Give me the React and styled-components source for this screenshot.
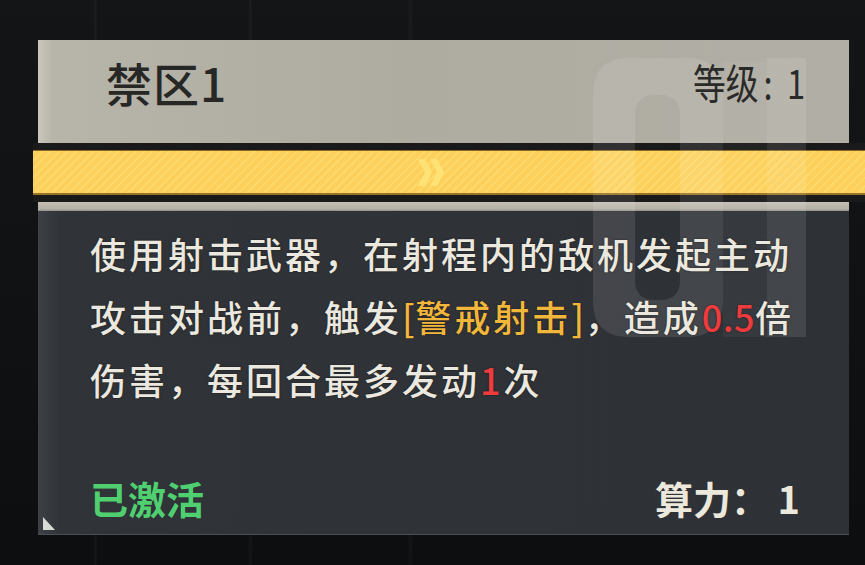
import React from "react";
import styled, { createGlobalStyle } from "styled-components";

const GlobalStyle = createGlobalStyle`
  html, body {
    margin: 0;
    padding: 0;
    background: #0f1012;
  }
  * { box-sizing: border-box; }
`;

const CJK = `"Noto Sans CJK SC", "Noto Sans", sans-serif`;

const Stage = styled.div`
  width: 865px;
  height: 565px;
  overflow: hidden;
  padding-top: 40px;
  background-color: #0f1012;
  background-image:
    linear-gradient(90deg, transparent 93px, rgba(255,255,255,0.035) 95px, transparent 98px),
    linear-gradient(90deg, transparent 248px, rgba(255,255,255,0.03) 250px, transparent 253px),
    linear-gradient(90deg, transparent 408px, rgba(255,255,255,0.03) 410px, transparent 413px),
    linear-gradient(180deg, #141517 0%, #0d0e10 100%);
  font-family: ${CJK};
`;

const Card = styled.div`
  position: relative;
  margin-left: 38px;
  width: 811px;
`;

const Header = styled.div`
  height: 103px;
  display: flex;
  align-items: center;
  justify-content: space-between;
  padding: 0 44px 0 68px;
  background: linear-gradient(90deg, #cbc7bb 0px, #b7b4aa 14px, #aeaba1 45%, #b1aea5 100%);
`;

const Title = styled.h1`
  position: relative;
  z-index: 2;
  margin: 0;
  font-size: 46px;
  font-weight: 500;
  line-height: 1;
  color: #272726;
  letter-spacing: 1px;
  transform: translateY(-10px);
`;

const Level = styled.div`
  position: relative;
  z-index: 2;
  display: flex;
  align-items: baseline;
  font-size: 41px;
  font-weight: 400;
  line-height: 1;
  color: #2a2a29;
  transform: translateY(-10px) scaleX(0.8);
  transform-origin: right center;
  white-space: nowrap;
`;

const LevelPart = styled.span`
  margin-left: ${(p) => p.$gap || 0}px;
`;

const Ribbon = styled.div`
  margin: 0 -16px 0 -5px;
  padding: 7px 0;
  background: #1a1a1a;
`;

const RibbonBar = styled.div`
  height: 45px;
  display: flex;
  align-items: center;
  padding-left: 385px;
  border-top: 1px solid #8a6a22;
  border-bottom: 2px solid #9a7426;
  background-color: #fcd05a;
  background-image: repeating-linear-gradient(
    135deg,
    rgba(255, 236, 150, 0.28) 0px,
    rgba(255, 236, 150, 0.28) 2px,
    transparent 2px,
    transparent 6px
  );
`;

const Strip = styled.div`
  height: 9px;
  background: linear-gradient(180deg, #c3bfb4 0%, #b3b0a6 80%, #8e8b84 100%);
`;

const Body = styled.div`
  height: 324px;
  display: flex;
  flex-direction: column;
  justify-content: space-between;
  padding: 11px 49px 17px 52px;
  background: linear-gradient(90deg, #3d4045 0px, #303338 22px, #2e3136 100%);
  border-bottom: 1px solid #4b4e52;
`;

const Description = styled.div`
  position: relative;
  z-index: 2;
  font-size: 36px;
  font-weight: 500;
  line-height: 63px;
  color: #ebe8df;
  text-shadow: 0 0 2px rgba(0, 0, 0, 0.55);
`;

const Line = styled.div`
  white-space: nowrap;
  letter-spacing: 3px;
`;

const Mark = styled.span`
  color: ${(p) => p.$tone};
  letter-spacing: ${(p) => (p.$tight ? "0.5px" : "inherit")};
`;

const Footer = styled.div`
  position: relative;
  z-index: 2;
  display: flex;
  justify-content: space-between;
  align-items: flex-end;
  font-size: 38px;
  line-height: 38px;
  font-weight: 700;
`;

const Status = styled.span`
  color: #4fcf6f;
`;

const Cost = styled.span`
  color: #ece8dc;
  white-space: pre;
`;

const Watermark = styled.svg`
  position: absolute;
  left: 555px;
  top: 18px;
  width: 213px;
  height: 280px;
  z-index: 1;
  pointer-events: none;
`;

const CornerTab = styled.svg`
  position: absolute;
  left: 5px;
  bottom: 5px;
  width: 12px;
  height: 13px;
  z-index: 2;
`;

function Chevrons() {
  return (
    <svg width="27" height="27" viewBox="0 0 27 27">
      <g fill="#ffe47a" opacity="0.9">
        <polygon points="0,0 7,0 14,13.5 7,27 0,27 7,13.5" />
        <polygon points="12,0 19,0 26,13.5 19,27 12,27 19,13.5" />
      </g>
    </svg>
  );
}

export default function App() {
  return (
    <>
      <GlobalStyle />
      <Stage>
        <Card>
          <Header>
            <Title>禁区1</Title>
            <Level>
              <LevelPart>等级</LevelPart>
              <LevelPart $gap={6}>:</LevelPart>
              <LevelPart $gap={18}>1</LevelPart>
            </Level>
          </Header>
          <Ribbon>
            <RibbonBar>
              <Chevrons />
            </RibbonBar>
          </Ribbon>
          <Strip />
          <Body>
            <Description>
              <Line>使用射击武器，在射程内的敌机发起主动</Line>
              <Line>
                攻击对战前，触发<Mark $tone="#f2b63a" $tight>[</Mark>
                <Mark $tone="#f2b63a">警戒射击</Mark>
                <Mark $tone="#f2b63a" $tight>]</Mark>，造成
                <Mark $tone="#ee3b3e" $tight>0.5</Mark>倍
              </Line>
              <Line>
                伤害，每回合最多发动<Mark $tone="#ee3b3e">1</Mark>次
              </Line>
            </Description>
            <Footer>
              <Status>已激活</Status>
              <Cost>算力： 1</Cost>
            </Footer>
          </Body>
          <Watermark viewBox="0 0 213 280">
            <path
              fillRule="evenodd"
              fill="rgba(255,255,255,0.1)"
              d="M36 0 H94 Q130 0 130 36 V243 Q130 279 94 279 H36 Q0 279 0 243 V36 Q0 0 36 0 Z
                 M62 37 Q42 37 42 57 V222 Q42 242 62 242 H67 Q87 242 87 222 V57 Q87 37 67 37 Z"
            />
            <rect x="130" y="4" width="44" height="275" fill="rgba(255,255,255,0.04)" />
            <rect x="174" y="0" width="39" height="279" fill="rgba(255,255,255,0.1)" />
          </Watermark>
          <CornerTab viewBox="0 0 12 13">
            <polygon points="0,0 12,13 0,13" fill="#d9d9d6" />
          </CornerTab>
        </Card>
      </Stage>
    </>
  );
}
